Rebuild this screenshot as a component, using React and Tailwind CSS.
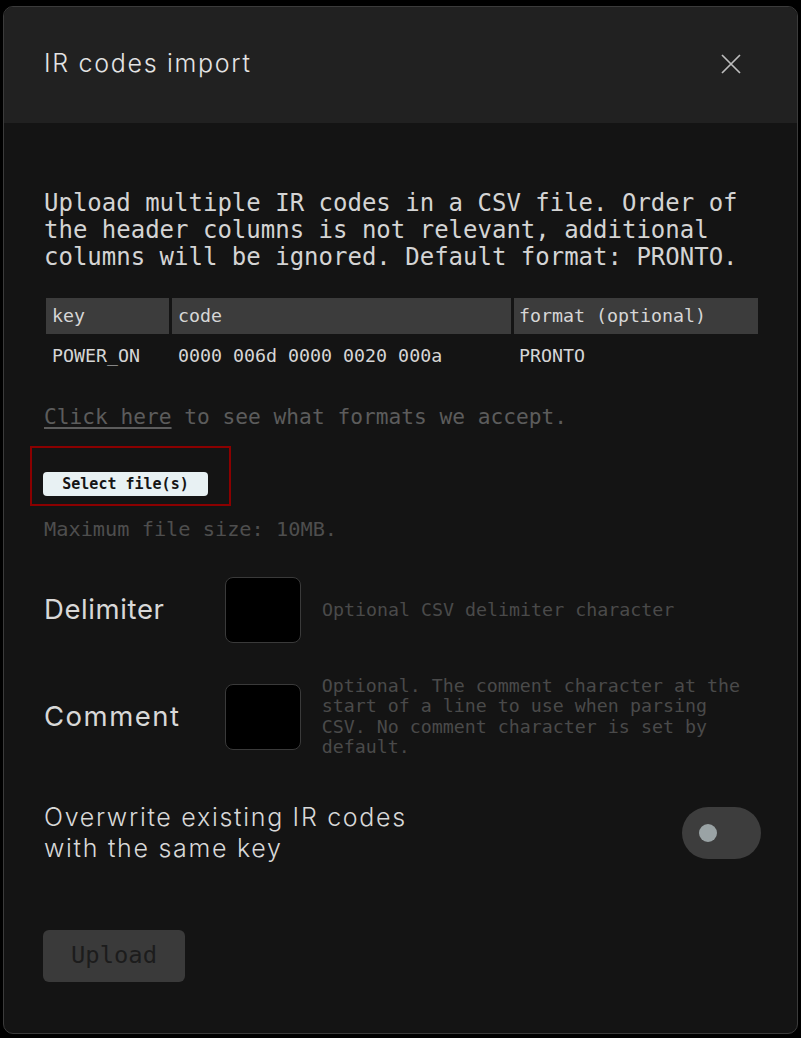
import React from "react";

const mono = { fontFamily: '"DejaVu Sans Mono", "Liberation Mono", monospace' };
const sans = { fontFamily: 'Inter, "Noto Sans", sans-serif' };

export default function App() {
  return (
    <div className="min-h-[1038px] bg-black pt-[6px] px-[3px]">
      <div className="w-[795px] h-[1028px] rounded-[10px] border border-[#3b3b3b] bg-[#141414] overflow-hidden flex flex-col">
        <header className="h-[116px] shrink-0 bg-[#212121] flex items-center justify-between pl-[40px] pr-[56px] pb-[3px]">
          <h1 style={sans} className="text-[25px] font-light text-[#e4e4e4] tracking-[1.7px]">IR codes import</h1>
          <svg width="20" height="20" viewBox="0 0 20 20">
            <path d="M1 1 L19 19 M19 1 L1 19" stroke="#bdbdbd" strokeWidth="1.7" fill="none" />
          </svg>
        </header>
        <div className="pl-[40px] pr-[36px] pt-[67px]">
          <p style={mono} className="text-[24px] leading-[27px] text-[#d4d4d4]">
            Upload multiple IR codes in a CSV file. Order of the header columns is not relevant, additional columns will be ignored. Default format: PRONTO.
          </p>
          <table style={mono} className="mt-[24px] -ml-[1px] w-[718px] border-separate border-spacing-[3px] text-[18.3px] text-[#d6d6d6]">
            <thead>
              <tr className="h-[36px]">
                <th className="w-[123px] bg-[#3c3c3c] text-left font-normal pl-[6px]">key</th>
                <th className="w-[339px] bg-[#3c3c3c] text-left font-normal pl-[6px]">code</th>
                <th className="bg-[#3c3c3c] text-left font-normal pl-[5px]">format (optional)</th>
              </tr>
            </thead>
            <tbody>
              <tr className="h-[38px]">
                <td className="pl-[6px]">POWER_ON</td>
                <td className="pl-[6px]">0000 006d 0000 0020 000a</td>
                <td className="pl-[5px]">PRONTO</td>
              </tr>
            </tbody>
          </table>
          <p style={mono} className="mt-[25px] text-[21.2px] leading-[27px] text-[#5c5c5c]">
            <span className="underline underline-offset-[3px]">Click here</span> to see what formats we accept.
          </p>
          <div className="mt-[16px] -ml-[14px] w-[201px] h-[60px] border-2 border-[#8b0000] pl-[11px] pt-[24px]">
            <button style={mono} className="w-[165px] h-[24px] rounded-[4px] bg-[#e8f1f3] text-[15px] font-bold text-[#151515] flex items-center justify-center">
              Select file(s)
            </button>
          </div>
          <p style={mono} className="mt-[10px] text-[20.3px] leading-[27px] text-[#4e4e4e]">Maximum file size: 10MB.</p>

          <div className="mt-[34px] flex items-center">
            <div style={sans} className="w-[181px] text-[27.5px] text-[#d8d8d8] tracking-[0.6px]">Delimiter</div>
            <div className="w-[76px] h-[66px] rounded-[8px] border border-[#3a3a3a] bg-black shrink-0" />
            <div style={mono} className="ml-[21px] text-[18.3px] leading-[20px] text-[#4a4a4a]">Optional CSV delimiter character</div>
          </div>
          <div className="mt-[33px] flex items-center">
            <div style={sans} className="w-[181px] text-[27.5px] text-[#d8d8d8] tracking-[1.5px]">Comment</div>
            <div className="w-[76px] h-[66px] rounded-[8px] border border-[#3a3a3a] bg-black shrink-0" />
            <div style={mono} className="ml-[21px] w-[440px] text-[18.3px] leading-[20.3px] text-[#4a4a4a]">
              Optional. The comment character at the start of a line to use when parsing CSV. No comment character is set by default.
            </div>
          </div>

          <div className="mt-[45px] flex items-center justify-between">
            <div style={sans} className="max-w-[420px] text-[25px] leading-[31px] font-light text-[#d8d8d8] tracking-[1.7px]">
              Overwrite existing IR codes with the same key
            </div>
            <div className="w-[79px] h-[52px] rounded-full bg-[#3d3d3d] flex items-center pl-[17px]">
              <div className="w-[18px] h-[18px] rounded-full bg-[#9aa3a5]" />
            </div>
          </div>

          <button style={mono} className="mt-[66px] -ml-[1px] w-[142px] h-[52px] rounded-[6px] bg-[#3a3a3a] text-[23.8px] text-[#1c1c1c] flex items-center justify-center">
            Upload
          </button>
        </div>
      </div>
    </div>
  );
}
